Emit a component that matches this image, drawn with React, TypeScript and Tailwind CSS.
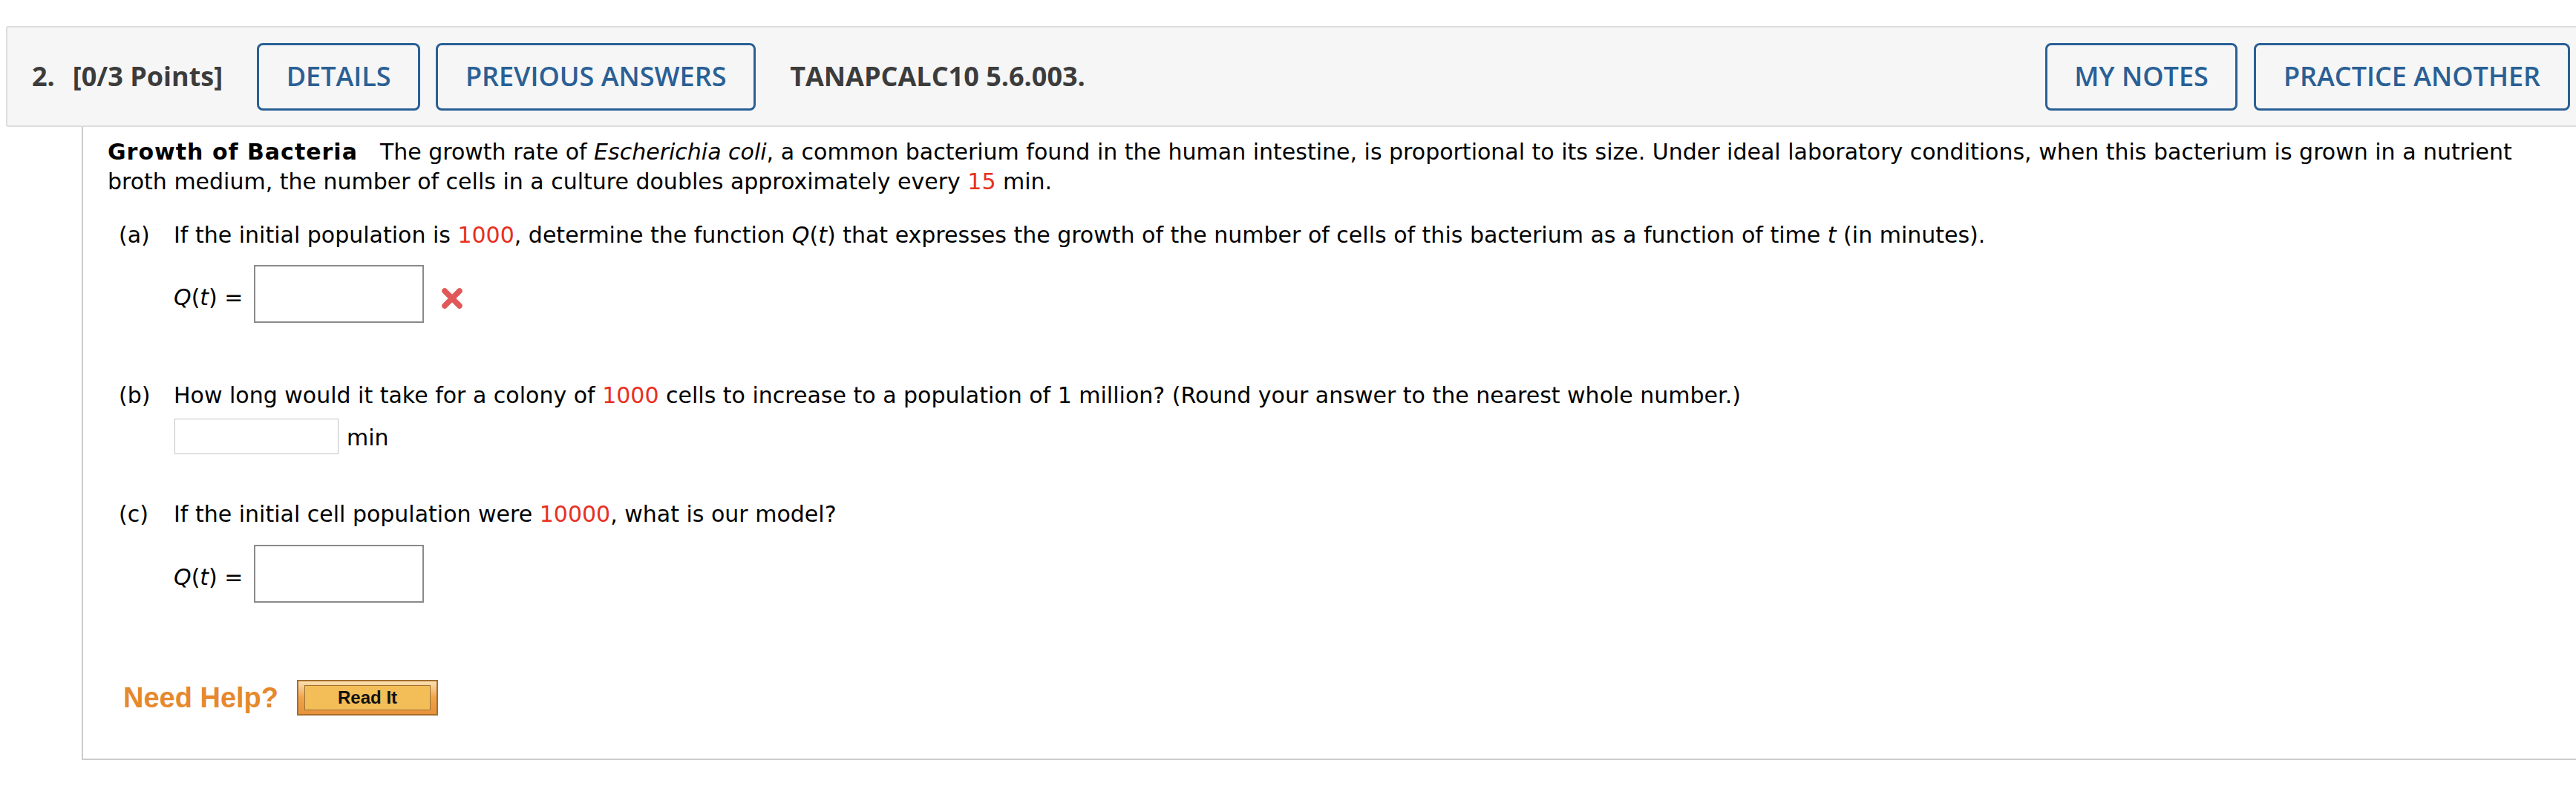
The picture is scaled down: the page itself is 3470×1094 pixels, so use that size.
import React from 'react'

const body = "font-['DejaVu_Sans',Verdana,sans-serif] text-[30px] leading-[40px] text-black"
const head = "font-['Open_Sans','Noto_Sans',sans-serif] text-[36px]"

function HeadButton({ label, width }: { label: string; width: string }) {
  return (
    <button
      className={`${width} h-[91px] shrink-0 flex items-center justify-center rounded-[8px] border-[3px] border-[#2a6095] text-[#2a6095] font-semibold ${head}`}
    >
      {label}
    </button>
  )
}

function Red({ children }: { children: React.ReactNode }) {
  return <span className="text-[#e8301f]">{children}</span>
}

function Qt() {
  return (
    <span className="mt-[10px] mr-[14px] whitespace-pre">
      <i>Q</i>(<i>t</i>) =
    </span>
  )
}

function WrongMark() {
  return (
    <svg width="32" height="32" viewBox="0 0 32 32" className="ml-[22px] mt-[12px] blur-[0.7px]">
      <path d="M6 6 L26 26 M26 6 L6 26" stroke="#e25858" strokeWidth="7.5" strokeLinecap="round" />
    </svg>
  )
}

function Part({ tag, children }: { tag: string; children: React.ReactNode }) {
  return (
    <div className="flex">
      <span className="ml-[15px] w-[74px] shrink-0">{tag}</span>
      <span>{children}</span>
    </div>
  )
}

export default function App() {
  return (
    <div className="w-[3470px] h-[1094px] bg-white overflow-hidden pt-[35px]">
      {/* question header */}
      <div className="ml-[8px] h-[136px] flex items-center bg-[#f6f6f6] border-2 border-r-0 border-[#dddddd] rounded-l-[3px] pl-[33px] pr-[8px]">
        <span className={`${head} font-bold text-[#3c3c3c] mr-[24px]`}>2.</span>
        <span className={`${head} font-bold text-[#3c3c3c] mr-[46px]`}>[0/3 Points]</span>
        <div className="flex gap-[21px]">
          <HeadButton label="DETAILS" width="w-[220px]" />
          <HeadButton label="PREVIOUS ANSWERS" width="w-[431px]" />
        </div>
        <span className={`${head} font-bold text-[#3c3c3c] ml-[46px]`}>TANAPCALC10 5.6.003.</span>
        <div className="ml-auto flex gap-[22px]">
          <HeadButton label="MY NOTES" width="w-[259px]" />
          <HeadButton label="PRACTICE ANOTHER" width="w-[426px]" />
        </div>
      </div>

      {/* question body */}
      <div className={`ml-[110px] border-l-2 border-b-2 border-[#cccccc] pt-[14px] pl-[33px] pb-[58px] ${body}`}>
        <p className="w-[3300px]">
          <b className="mr-[30px] tracking-[1px]">Growth of Bacteria</b>
          The growth rate of <i>Escherichia coli</i>, a common bacterium found in the human intestine, is
          proportional to its size. Under ideal laboratory conditions, when this bacterium is grown in a nutrient
          <br />
          broth medium, the number of cells in a culture doubles approximately every <Red>15</Red> min.
        </p>

        <div className="mt-[32px]">
          <Part tag="(a)">
            If the initial population is <Red>1000</Red>, determine the function <i>Q</i>(<i>t</i>) that expresses
            the growth of the number of cells of this bacterium as a function of time <i>t</i> (in minutes).
          </Part>
        </div>
        <div className="mt-[20px] ml-[89px] flex items-center">
          <Qt />
          <input className="w-[229px] h-[78px] border-2 border-[#8a8a8a] bg-white" />
          <WrongMark />
        </div>

        <div className="mt-[78px]">
          <Part tag="(b)">
            How long would it take for a colony of <Red>1000</Red> cells to increase to a population of 1 million?
            (Round your answer to the nearest whole number.)
          </Part>
        </div>
        <div className="mt-[11px] ml-[90px] flex items-center gap-[11px]">
          <input className="w-[221px] h-[48px] border border-[#c4c4c4] bg-white" />
          <span className="mt-[4px]">min</span>
        </div>

        <div className="mt-[61px]">
          <Part tag="(c)">
            If the initial cell population were <Red>10000</Red>, what is our model?
          </Part>
        </div>
        <div className="mt-[21px] ml-[89px] flex items-center">
          <Qt />
          <input className="w-[229px] h-[78px] border-2 border-[#8a8a8a] bg-white" />
        </div>

        <div className="mt-[104px] ml-[21px] flex items-center gap-[25px]">
          <span className="font-['Liberation_Sans',Arial,sans-serif] text-[38px] font-bold text-[#e6882c]">
            Need Help?
          </span>
          <button className="w-[190px] h-[48px] border-2 border-[#a46e2c] bg-gradient-to-b from-[#fbe0b0] via-[#f0a448] to-[#e8923a] px-[8px] py-[5px]">
            <div className="h-full border border-[#9c7436] bg-[#f3bd58] flex items-center justify-center font-['Liberation_Sans',Arial,sans-serif] text-[24px] font-bold text-[#111] leading-none">
              Read It
            </div>
          </button>
        </div>
      </div>
    </div>
  )
}
